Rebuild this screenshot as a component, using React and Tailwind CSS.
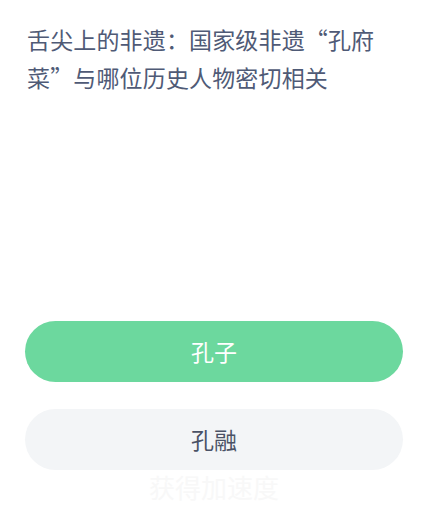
import React from "react";

const font = { fontFamily: '"Noto Sans CJK SC", "Noto Sans", sans-serif' };

const App = () => {
  return (
    <div className="w-[428px] h-[505px] bg-white overflow-hidden" style={font}>
      <div className="pt-[20px] pl-[27px] w-[387px]">
        <h1 className="text-[23px] leading-[38px] tracking-[0.15px] text-[#4f5a76] font-normal">
          舌尖上的非遗：国家级非遗“孔府菜”与哪位历史人物密切相关
        </h1>
      </div>

      <div className="mt-[225px] px-[25px] flex flex-col gap-[27px]">
        <button className="h-[61px] w-full rounded-full bg-[#6cd89e] text-white text-[23px]">
          孔子
        </button>
        <button className="h-[61px] w-full rounded-full bg-[#f3f5f7] text-[#4a5266] text-[23px]">
          孔融
        </button>
      </div>

      {/* faint watermark under the options */}
      <div className="mt-[3px] text-center text-[26px] leading-[28px] text-[#f8f8f8]">
        获得加速度
      </div>
    </div>
  );
};

export default App;
